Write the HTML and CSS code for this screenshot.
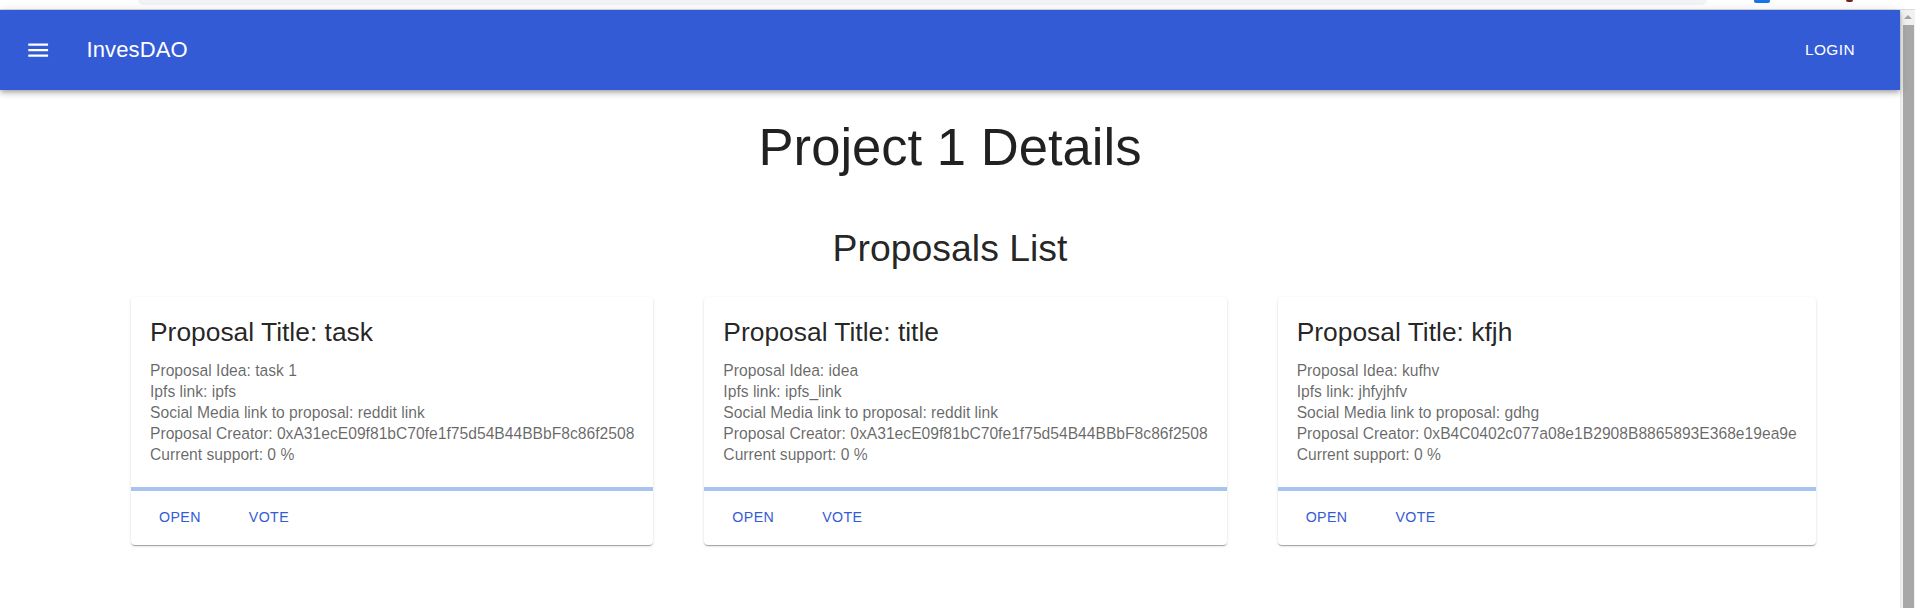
FILE: index.html
```html
<!DOCTYPE html>
<html lang="en">
<head>
<meta charset="utf-8">
<title>InvesDAO</title>
<link rel="stylesheet" href="styles.css">
</head>
<body>
<div class="chrome">
  <div class="chrome-pill"></div>
  <div class="chrome-icon-blue"></div>
  <div class="chrome-icon-red"></div>
</div>
<div class="viewport">
  <div class="page">
    <header class="appbar">
      <button class="menu-btn" aria-label="menu">
        <svg class="menu-icon" viewBox="0 0 24 24" width="26.4" height="26.4"><path d="M3 18h18v-2H3v2zm0-5h18v-2H3v2zm0-7v2h18V6H3z" fill="#fff"/></svg>
      </button>
      <div class="brand">InvesDAO</div>
      <div class="spacer"></div>
      <button class="login-btn">LOGIN</button>
    </header>
    <main class="main">
      <h1 class="page-title">Project 1 Details</h1>
      <h2 class="section-title">Proposals List</h2>
      <div class="cards">
        <div class="card">
          <div class="card-content">
            <h3 class="card-title">Proposal Title: task</h3>
            <p class="card-line">Proposal Idea: task 1</p>
            <p class="card-line">Ipfs link: ipfs</p>
            <p class="card-line">Social Media link to proposal: reddit link</p>
            <p class="card-line">Proposal Creator: 0xA31ecE09f81bC70fe1f75d54B44BBbF8c86f2508</p>
            <p class="card-line">Current support: 0 %</p>
          </div>
          <div class="progress"><div class="progress-bar" style="width:0%"></div></div>
          <div class="card-actions">
            <button class="text-btn">OPEN</button>
            <button class="text-btn">VOTE</button>
          </div>
        </div>
        <div class="card">
          <div class="card-content">
            <h3 class="card-title">Proposal Title: title</h3>
            <p class="card-line">Proposal Idea: idea</p>
            <p class="card-line">Ipfs link: ipfs_link</p>
            <p class="card-line">Social Media link to proposal: reddit link</p>
            <p class="card-line">Proposal Creator: 0xA31ecE09f81bC70fe1f75d54B44BBbF8c86f2508</p>
            <p class="card-line">Current support: 0 %</p>
          </div>
          <div class="progress"><div class="progress-bar" style="width:0%"></div></div>
          <div class="card-actions">
            <button class="text-btn">OPEN</button>
            <button class="text-btn">VOTE</button>
          </div>
        </div>
        <div class="card">
          <div class="card-content">
            <h3 class="card-title">Proposal Title: kfjh</h3>
            <p class="card-line">Proposal Idea: kufhv</p>
            <p class="card-line">Ipfs link: jhfyjhfv</p>
            <p class="card-line">Social Media link to proposal: gdhg</p>
            <p class="card-line">Proposal Creator: 0xB4C0402c077a08e1B2908B8865893E368e19ea9e</p>
            <p class="card-line">Current support: 0 %</p>
          </div>
          <div class="progress"><div class="progress-bar" style="width:0%"></div></div>
          <div class="card-actions">
            <button class="text-btn">OPEN</button>
            <button class="text-btn">VOTE</button>
          </div>
        </div>
      </div>
    </main>
  </div>
  <div class="scrollbar">
    <div class="scroll-arrow"></div>
    <div class="scroll-thumb"></div>
  </div>
</div>
</body>
</html>
```
FILE: styles.css
```css
* { box-sizing: border-box; }
html, body {
  margin: 0;
  padding: 0;
  height: 100%;
  overflow: hidden;
  background: #fff;
  font-family: "Liberation Sans", Arial, sans-serif;
}
body { display: flex; flex-direction: column; }

.chrome {
  height: 10px;
  flex: none;
  display: flex;
  align-items: flex-start;
  padding-left: 138px;
  border-bottom: 1px solid #dcdcdc;
  background: #fff;
}
.chrome-pill {
  width: 1569px;
  height: 5px;
  background: #f1f3f4;
  border-radius: 0 0 12px 12px;
}
.chrome-icon-blue {
  margin-left: 47px;
  width: 16px;
  height: 3px;
  background: #1a73e8;
  border-radius: 0 0 2px 2px;
}
.chrome-icon-red {
  margin-left: 76px;
  width: 7px;
  height: 2px;
  background: #7a1f1f;
  border-radius: 0 0 3px 3px;
}

.viewport {
  flex: 1;
  display: flex;
  min-height: 0;
}
.page {
  flex: 1;
  min-width: 0;
  display: flex;
  flex-direction: column;
}

.appbar {
  height: 80px;
  flex: none;
  display: flex;
  align-items: center;
  background: #345bd6;
  color: #fff;
  padding: 0 36px 0 12px;
  box-shadow: 0 2px 4px -1px rgba(0,0,0,0.2), 0 4px 5px 0 rgba(0,0,0,0.14), 0 1px 10px 0 rgba(0,0,0,0.12);
  position: relative;
  z-index: 1;
}
.menu-btn {
  background: none;
  border: 0;
  padding: 13px;
  margin: 0;
  display: flex;
  cursor: pointer;
}
.menu-icon { display: block; }
.brand {
  margin-left: 22px;
  font-size: 22px;
  line-height: 1.6;
  font-weight: 400;
  letter-spacing: 0.15px;
}
.spacer { flex: 1; }
.login-btn {
  background: none;
  border: 0;
  color: #fff;
  font-family: inherit;
  font-size: 15.4px;
  letter-spacing: 0.44px;
  padding: 7px 9px;
  line-height: 1.75;
  cursor: pointer;
}

.main {
  flex: 1;
  display: flex;
  flex-direction: column;
}
.page-title {
  margin: 26px 0 0;
  text-align: center;
  font-size: 52.6px;
  line-height: 1.167;
  font-weight: 400;
  color: rgba(0,0,0,0.87);
}
.section-title {
  margin: 48px 0 0;
  text-align: center;
  font-size: 37.4px;
  line-height: 1.235;
  font-weight: 400;
  color: rgba(0,0,0,0.87);
}

.cards {
  margin-top: 25px;
  display: flex;
  align-items: flex-start;
  gap: 51px;
  padding-left: 131px;
}
.card {
  background: #fff;
  border-radius: 4px;
  box-shadow: 0 2px 1px -1px rgba(0,0,0,0.2), 0 1px 1px 0 rgba(0,0,0,0.14), 0 1px 3px 0 rgba(0,0,0,0.12);
  overflow: hidden;
}
.card-content {
  padding: 18px 19px 22px;
}
.card-title {
  margin: 0 0 10px;
  font-size: 26.4px;
  line-height: 35px;
  font-weight: 400;
  color: rgba(0,0,0,0.87);
  white-space: nowrap;
}
.card-line {
  margin: 0;
  font-size: 15.65px;
  line-height: 21px;
  color: rgba(0,0,0,0.6);
  white-space: nowrap;
}
.progress {
  height: 4px;
  background: #a6c4ef;
}
.progress-bar {
  height: 100%;
  background: #345bd6;
}
.card-actions {
  display: flex;
  align-items: center;
  gap: 10px;
  padding: 7px 9px 8px;
}
.text-btn {
  background: none;
  border: 0;
  color: #345bd6;
  font-family: inherit;
  font-size: 14.2px;
  letter-spacing: 0.4px;
  line-height: 27px;
  padding: 6px 19px;
  cursor: pointer;
}

.scrollbar {
  width: 15px;
  flex: none;
  background: #f1f1f1;
  border-left: 1px solid #e6e6e6;
  display: flex;
  flex-direction: column;
  align-items: center;
}
.scroll-arrow {
  margin-top: 5px;
  width: 0;
  height: 0;
  border-left: 4px solid transparent;
  border-right: 4px solid transparent;
  border-bottom: 4px solid #a3a3a3;
}
.scroll-thumb {
  margin-top: 6px;
  width: 11px;
  flex: 1;
  background: #a8a8a8;
}
```
